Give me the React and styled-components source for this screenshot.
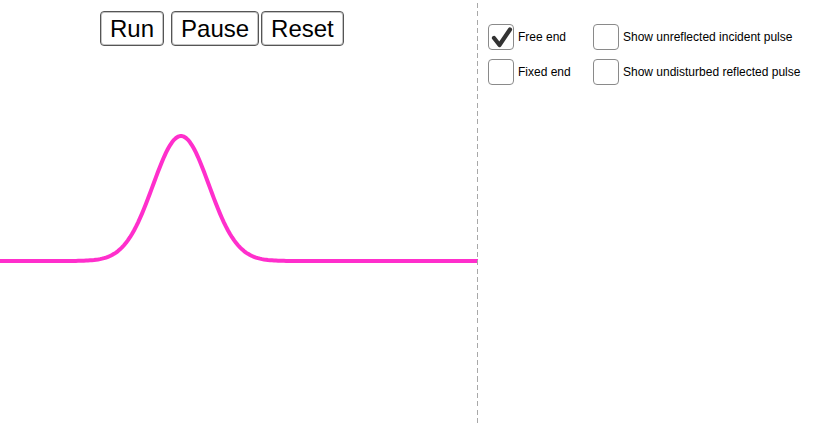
import React from 'react'
import styled, { createGlobalStyle } from 'styled-components'

const GlobalStyle = createGlobalStyle`
    html, body {
        margin: 0;
        padding: 0;
        background: #fff;
        font-family: "Liberation Sans", Arial, sans-serif;
    }
`

const PEAK_X = 181
const BASE_Y = 261
const AMP = 125
const SIGMA = 28

function pulsePath() {
    const pts = []
    for (let x = 0; x <= 478; x += 2) {
        const y = BASE_Y - AMP * Math.exp(-((x - PEAK_X) ** 2) / (2 * SIGMA * SIGMA))
        pts.push(`${x},${y.toFixed(2)}`)
    }
    return 'M' + pts.join(' L')
}

function CheckMark() {
    return (
        <svg width="26" height="26" viewBox="0 0 26 26">
            <path d="M6 14 L11.5 21 L22 5.5" fill="none" stroke="#333" strokeWidth="4.2" strokeLinecap="round" strokeLinejoin="round" />
        </svg>
    )
}

function Option({ label, checked }) {
    return (
        <OptionRow>
            <Box>{checked && <CheckMark />}</Box>
            <span>{label}</span>
        </OptionRow>
    )
}

function App() {
    return (
        <Page>
            <GlobalStyle />
            <Stage>
                <ButtonBar>
                    <ControlButton $gap={7}>Run</ControlButton>
                    <ControlButton $gap={2}>Pause</ControlButton>
                    <ControlButton>Reset</ControlButton>
                </ButtonBar>
                <Wave viewBox="0 46 478 384" width="478" height="384">
                    <path d={pulsePath()} fill="none" stroke="#ff2fcc" strokeWidth="4" strokeLinejoin="round" />
                </Wave>
            </Stage>
            <Divider />
            <Options>
                <Option label="Free end" checked />
                <Option label="Show unreflected incident pulse" />
                <Option label="Fixed end" />
                <Option label="Show undisturbed reflected pulse" />
            </Options>
        </Page>
    )
}

const Page = styled.div`
    display: flex;
    width: 830px;
    height: 430px;
    overflow: hidden;
`

const Stage = styled.div`
    width: 477px;
    display: flex;
    flex-direction: column;
    padding-top: 11px;
    box-sizing: border-box;
`

const ButtonBar = styled.div`
    display: flex;
    padding-left: 100px;
    height: 35px;
`

const ControlButton = styled.button`
    height: 35px;
    padding: 0 9px;
    margin: 0 ${p => p.$gap || 0}px 0 0;
    font-family: "Liberation Sans", Arial, sans-serif;
    font-size: 24px;
    color: #000;
    background: #fff;
    border: 1px solid #555;
    border-radius: 4px;
    box-shadow: inset 0 0 0 1px #c4c4c4;
    line-height: 1;
`

const Wave = styled.svg`
    display: block;
    overflow: visible;
`

const Divider = styled.div`
    width: 1px;
    margin-top: 3px;
    height: 422px;
    background: repeating-linear-gradient(to bottom, #a8a8a8 0 5px, transparent 5px 8.3px);
`

const Options = styled.div`
    display: grid;
    grid-template-columns: 105px auto;
    grid-auto-rows: 26px;
    row-gap: 9px;
    padding: 24px 0 0 10px;
    align-content: start;
`

const OptionRow = styled.label`
    display: flex;
    align-items: center;
    gap: 4px;
    font-size: 12px;
    color: #000;
`

const Box = styled.div`
    width: 26px;
    height: 26px;
    box-sizing: border-box;
    border: 1.5px solid #8a8a8a;
    border-radius: 4px;
    background: #fff;
    display: flex;
    align-items: center;
    justify-content: center;
    svg { margin: -1.5px; }
`

export default App
